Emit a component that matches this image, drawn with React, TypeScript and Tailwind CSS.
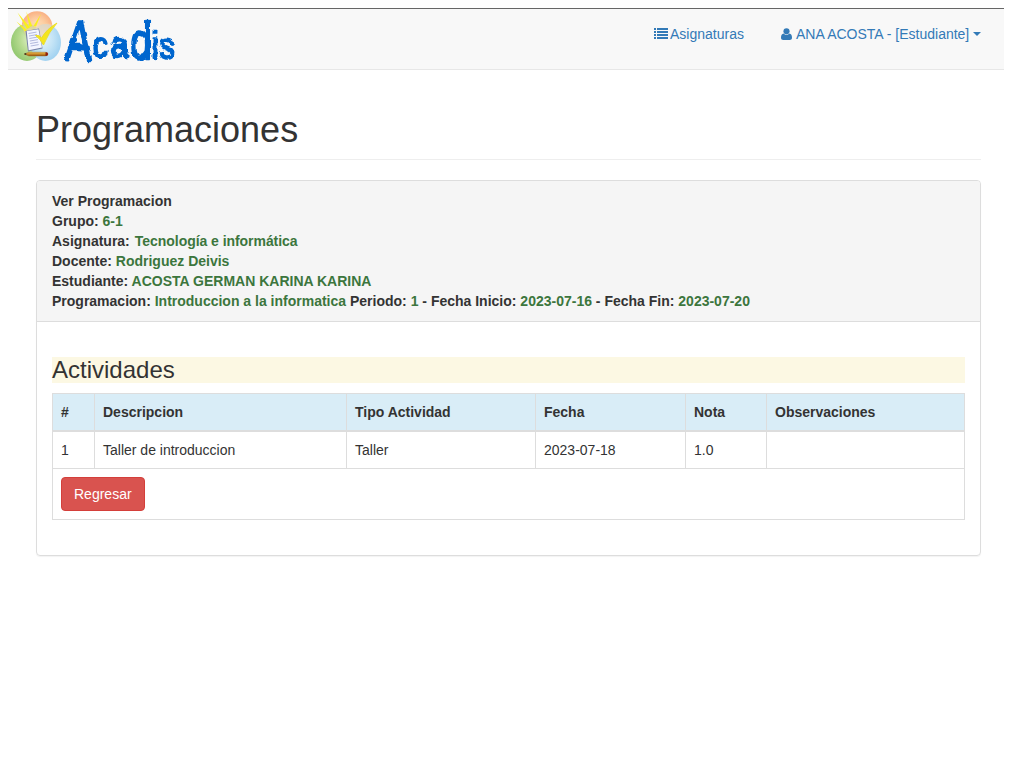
import React from "react";

const activities = [
  { id: 1, description: "Taller de introduccion", type: "Taller", date: "2023-07-18", grade: "1.0", notes: "" },
];

function Logo() {
  return (
    <svg width="170" height="59" viewBox="8 9 170 59" role="img" aria-label="Acadis" className="block overflow-visible">
      <defs>
        <radialGradient id="orange">
          <stop offset="0" stopColor="#ffe4c4" />
          <stop offset="0.6" stopColor="#fcc99c" />
          <stop offset="1" stopColor="#f9b083" />
        </radialGradient>
        <radialGradient id="green" cx="0.65" cy="0.4" r="0.65">
          <stop offset="0" stopColor="#e6f3cc" />
          <stop offset="0.55" stopColor="#b3da8a" />
          <stop offset="1" stopColor="#8cc566" />
        </radialGradient>
        <radialGradient id="blue" cx="0.4" cy="0.4" r="0.65">
          <stop offset="0" stopColor="#e4f4fb" />
          <stop offset="0.55" stopColor="#bbe0f5" />
          <stop offset="1" stopColor="#92cbef" />
        </radialGradient>
        <linearGradient id="wood" x2="0" y2="1">
          <stop offset="0" stopColor="#f4bd45" />
          <stop offset="1" stopColor="#995310" />
        </linearGradient>
        <filter id="ink" x="-5%" y="-10%" width="110%" height="120%">
          <feTurbulence type="fractalNoise" baseFrequency="0.16" numOctaves="2" seed="4" result="n" />
          <feDisplacementMap in="SourceGraphic" in2="n" scale="4" xChannelSelector="R" yChannelSelector="G" />
        </filter>
      </defs>
      <circle cx="37" cy="26.500" r="15.300" fill="url(#orange)" />
      <ellipse cx="27" cy="42.500" rx="16" ry="18.500" fill="url(#green)" opacity="0.92" />
      <ellipse cx="45.500" cy="42.500" rx="15.500" ry="18.500" fill="url(#blue)" opacity="0.88" />
      <path d="M22 24 Q37 21 52 24 Q50 38 37 42 Q24 38 22 24Z" fill="#fbd2a4" opacity="0.55" />
      <g fill="#f8f01c">
        <path d="M16.500 21.500 L27 30 L25 31.500Z" />
        <path d="M17.500 12.500 L30 27.500 L27 29Z" />
        <path d="M26.300 11.500 L32.200 26 L29.500 27Z" />
        <path d="M41 14 L36 26.500 L33.500 26Z" />
      </g>
      <path d="M25.500 31 L39 28.500 L42.500 48.500 L28 51.500Z" fill="#7680a8" />
      <path d="M26.700 31 L38.500 29.200 L42 47.500 L28.700 50.200Z" fill="#f3f5ff" />
      <path d="M28.500 33.500l8-1.400M29 36l8-1.400M29.400 38.500l8-1.400M29.900 41l8-1.400M30.200 43.500l8-1.400M30.700 46l8-1.400" stroke="#a9b1d8" strokeWidth="0.9" />
      <path d="M35.500 35.500 Q39.500 34.500 41.500 38 Q46.500 29 57 23 Q48.500 32 43.500 45 Q40 38.500 35.500 35.500Z" fill="#f5e51d" stroke="#eadd20" strokeWidth="0.900" />
      <path d="M24 54 L29 52.200 H45 Q48 52.200 48 54 Q48 56 45 56 H29Z" fill="url(#wood)" stroke="#8a5a20" strokeWidth="0.400" />
      <path d="M45.500 52.300 H46.200 Q48 52.300 48 54 Q48 55.800 46.200 55.800 H45.500Z" fill="#8f1c12" />
      <path d="M24 54 L26.200 53.100 V54.900Z" fill="#222" />
      <g
        fill="#0566ce"
        stroke="#0566ce"
        strokeLinejoin="round"
        strokeLinecap="round"
        fontFamily="'Liberation Sans', sans-serif"
        filter="url(#ink)"
      >
        <text transform="matrix(0.86 0.03 -0.08 1.260 64.800 60)" fontSize="45" strokeWidth="2">A</text>
        <text transform="matrix(0.86 0 0 1.060 93 57.500)" fontSize="34" strokeWidth="2">c</text>
        <text transform="matrix(0.95 0 0 1.050 110.500 57)" fontSize="34" strokeWidth="2.200">a</text>
        <text transform="matrix(0.78 0 0 1.070 130.500 59)" fontSize="49" strokeWidth="2.200">d</text>
        <text transform="matrix(0.95 0.05 0 1 151 58)" fontSize="38" strokeWidth="1.800">i</text>
        <text transform="matrix(0.92 0.05 0 1.120 159.500 58)" fontSize="33" strokeWidth="1.800">s</text>
      </g>
    </svg>
  );
}

function ListIcon() {
  return (
    <svg width="14" height="11" viewBox="0 0 14 11" fill="currentColor" shapeRendering="crispEdges">
      <path d="M0 0h2v2H0zM3 0h11v2H3zM0 3h2v2H0zM3 3h11v2H3zM0 6h2v2H0zM3 6h11v2H3zM0 9h2v2H0zM3 9h11v2H3z" />
    </svg>
  );
}

function UserIcon() {
  return (
    <svg width="11" height="12" viewBox="0 0 11 12" fill="currentColor">
      <circle cx="5.500" cy="3.200" r="3.050" />
      <path d="M2.600 5.400C.9 5.600 0 7.200 0 9.700 0 11 1 12 2.200 12h6.600C10 12 11 11 11 9.700 11 7.200 10.100 5.600 8.400 5.400 6.900 7.300 4.100 7.300 2.600 5.400z" />
    </svg>
  );
}

function Val({ children }: { children: React.ReactNode }) {
  return <span className="text-[#3c763d]">{children}</span>;
}

export default function App() {
  const th = "border border-b-2 border-[#ddd] p-2 text-left font-bold";
  const td = "border border-[#ddd] p-2";
  return (
    <div className="min-h-screen bg-white pl-2 pr-5 pt-2 font-['Liberation_Sans',Arial,sans-serif] text-sm leading-5 text-[#333]">
      <nav className="flex h-[62px] items-start justify-between border-b border-t border-b-[#e7e7e7] border-t-[#666] bg-[#f8f8f8]">
        <a href="#" aria-label="Acadis"><Logo /></a>
        <div className="flex pr-[23px] pt-[15px] text-[#337ab7]">
          <a href="#" className="mr-[37px] flex items-start gap-[2px]">
            <span className="pt-1"><ListIcon /></span>
            <span className="w-[74px] whitespace-nowrap">Asignaturas</span>
          </a>
          <a href="#" className="flex items-start">
            <span className="pt-1"><UserIcon /></span>
            <span className="ml-1 w-[174px] whitespace-nowrap">ANA ACOSTA - [Estudiante]</span>
            <span className="ml-[3px] mt-2 border-x-4 border-t-4 border-x-transparent border-t-current" />
          </a>
        </div>
      </nav>

      <main className="ml-7 mr-[23px]">
        <h1 className="mt-10 border-b border-[#eee] pb-[9px] text-[36px] font-normal leading-10">Programaciones</h1>

        <section className="mt-5 rounded border border-[#ddd] shadow-[0_1px_1px_rgba(0,0,0,0.05)]">
          <header className="rounded-t-[3px] border-b border-[#ddd] bg-[#f5f5f5] px-[15px] py-2.5 font-bold">
            <p>Ver Programacion</p>
            <p>Grupo: <Val>6-1</Val></p>
            <p>Asignatura: <Val>&#8202;<span className="tracking-[-0.05px]">Tecnología e informática</span></Val></p>
            <p>Docente: <Val>Rodriguez Deivis</Val></p>
            <p>Estudiante: <Val>ACOSTA GERMAN KARINA KARINA</Val></p>
            <p>
              Programacion: <Val>Introduccion a la informatica</Val> Periodo: <Val>1</Val> - Fecha Inicio:{" "}
              <Val>2023-07-16</Val> - Fecha Fin: <Val>2023-07-20</Val>
            </p>
          </header>
          <div className="px-[15px] pb-[35px] pt-[35px]">
            <h3 className="mb-2.5 h-[26px] bg-[#fcf8e3] text-[24px] font-normal leading-[26px]">Actividades</h3>
            <table className="w-full table-fixed border-collapse border border-[#ddd]">
              <colgroup>
                <col className="w-[42px]" />
                <col className="w-[252px]" />
                <col className="w-[189px]" />
                <col className="w-[150px]" />
                <col className="w-[81px]" />
                <col />
              </colgroup>
              <thead className="bg-[#d9edf7]">
                <tr>
                  <th className={th}>#</th>
                  <th className={th}>Descripcion</th>
                  <th className={th}>Tipo Actividad</th>
                  <th className={th}>Fecha</th>
                  <th className={th}>Nota</th>
                  <th className={th}>Observaciones</th>
                </tr>
              </thead>
              <tbody>
                {activities.map((a) => (
                  <tr key={a.id}>
                    <td className={td}>{a.id}</td>
                    <td className={td}>{a.description}</td>
                    <td className={td}>{a.type}</td>
                    <td className={td}>{a.date}</td>
                    <td className={td}>{a.grade}</td>
                    <td className={td}>{a.notes}</td>
                  </tr>
                ))}
                <tr>
                  <td colSpan={6} className={td}>
                    <button className="block rounded border border-[#d43f3a] bg-[#d9534f] px-3 py-1.5 leading-5 text-white">Regresar</button>
                  </td>
                </tr>
              </tbody>
            </table>
          </div>
        </section>
      </main>
    </div>
  );
}
